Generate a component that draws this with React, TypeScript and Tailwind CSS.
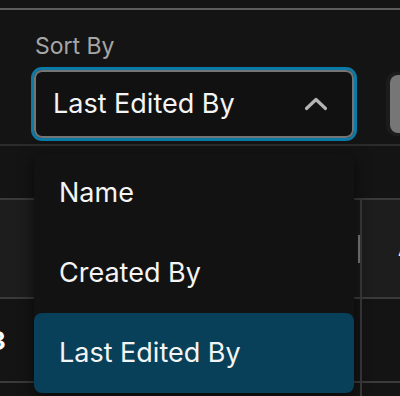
import { useState } from 'react';

const options = ['Name', 'Created By', 'Last Edited By'];

function ChevronUp() {
  return (
    <svg width="24" height="14" viewBox="0 0 24 14" fill="none">
      <path d="M2.5 11.5 L12 2.5 L21.5 11.5" stroke="#b4b4b4" strokeWidth="3.2" strokeLinecap="round" strokeLinejoin="round" />
    </svg>
  );
}

export default function App() {
  const [selected, setSelected] = useState('Last Edited By');
  const [open, setOpen] = useState(true);

  return (
    <div
      className="relative w-[400px] h-[396px] overflow-hidden bg-[#141414] text-[#f2f2f2]"
      style={{ fontFamily: 'Inter, "Noto Sans", sans-serif' }}
    >
      <div className="pt-[8px]">
        <div className="h-[2px] bg-[#5c5c5c]" />
      </div>

      {/* filter bar */}
      <div className="pl-[31px] pt-[23px]">
        <div className="pl-[4px] text-[23px] leading-[26px] text-[#a6a6a6]">Sort By</div>
        <div className="mt-[8px] flex items-center gap-[29px]">
          <button
            onClick={() => setOpen(!open)}
            className="shrink-0 w-[326px] h-[74px] rounded-[11px] border-[3px] border-[#0b7aa6] bg-[#111111]"
          >
            <div className="h-full rounded-[8px] border-2 border-[#747474] flex items-center justify-between pl-[17px] pr-[24px]">
              <span className="text-[27px] text-[#f4f4f4]">{selected}</span>
              <ChevronUp />
            </div>
          </button>
          <div className="shrink-0 w-[30px] h-[64px] rounded-l-[10px] bg-[#1c1c1c] pl-[4px] py-[3px]">
            <div className="h-full rounded-l-[8px] bg-[#767676]" />
          </div>
        </div>
      </div>
      <div className="mt-[3px] h-[2px] bg-[#2b2b2b]" />

      {/* table behind */}
      <div className="mt-[52px]">
        <div className="h-[2px] bg-[#3a3a3a]" />
        <div className="flex h-[97px] bg-[#1d1d1d]">
          <div className="w-[354px] shrink-0" />
          <div className="w-[6px] shrink-0 bg-[#191919] flex items-center justify-end">
            <div className="w-[2px] h-[28px] bg-[#7a7a7a]" />
          </div>
          <div className="w-[2px] shrink-0 bg-[#3a3a3a]" />
          <div className="flex-1 flex items-center pl-[36px] text-[22px] font-semibold whitespace-nowrap">Au</div>
        </div>
        <div className="h-[2px] bg-[#3a3a3a]" />
        <div className="flex h-[82px]">
          <div className="w-[360px] shrink-0 flex items-center overflow-hidden">
            <span className="-ml-[11px] text-[26px] font-bold text-white">3</span>
          </div>
          <div className="w-[2px] shrink-0 bg-[#3a3a3a]" />
          <div className="flex-1" />
        </div>
        <div className="h-[2px] bg-[#3a3a3a]" />
        <div className="flex h-[40px]">
          <div className="w-[360px] shrink-0" />
          <div className="w-[2px] shrink-0 bg-[#3a3a3a]" />
        </div>
      </div>

      {/* dropdown menu */}
      {open && (
        <div className="absolute left-[34px] top-[153px] w-[320px] rounded-[8px] bg-[#121212] shadow-[0_4px_16px_rgba(0,0,0,0.6)]">
          {options.map(opt => (
            <div
              key={opt}
              onClick={() => {
                setSelected(opt);
                setOpen(false);
              }}
              className={`h-[80px] flex items-center pl-[25px] text-[27px] text-[#f4f4f4] rounded-[8px] ${
                opt === selected ? 'bg-[#074058]' : ''
              }`}
            >
              {opt}
            </div>
          ))}
        </div>
      )}
    </div>
  );
}
